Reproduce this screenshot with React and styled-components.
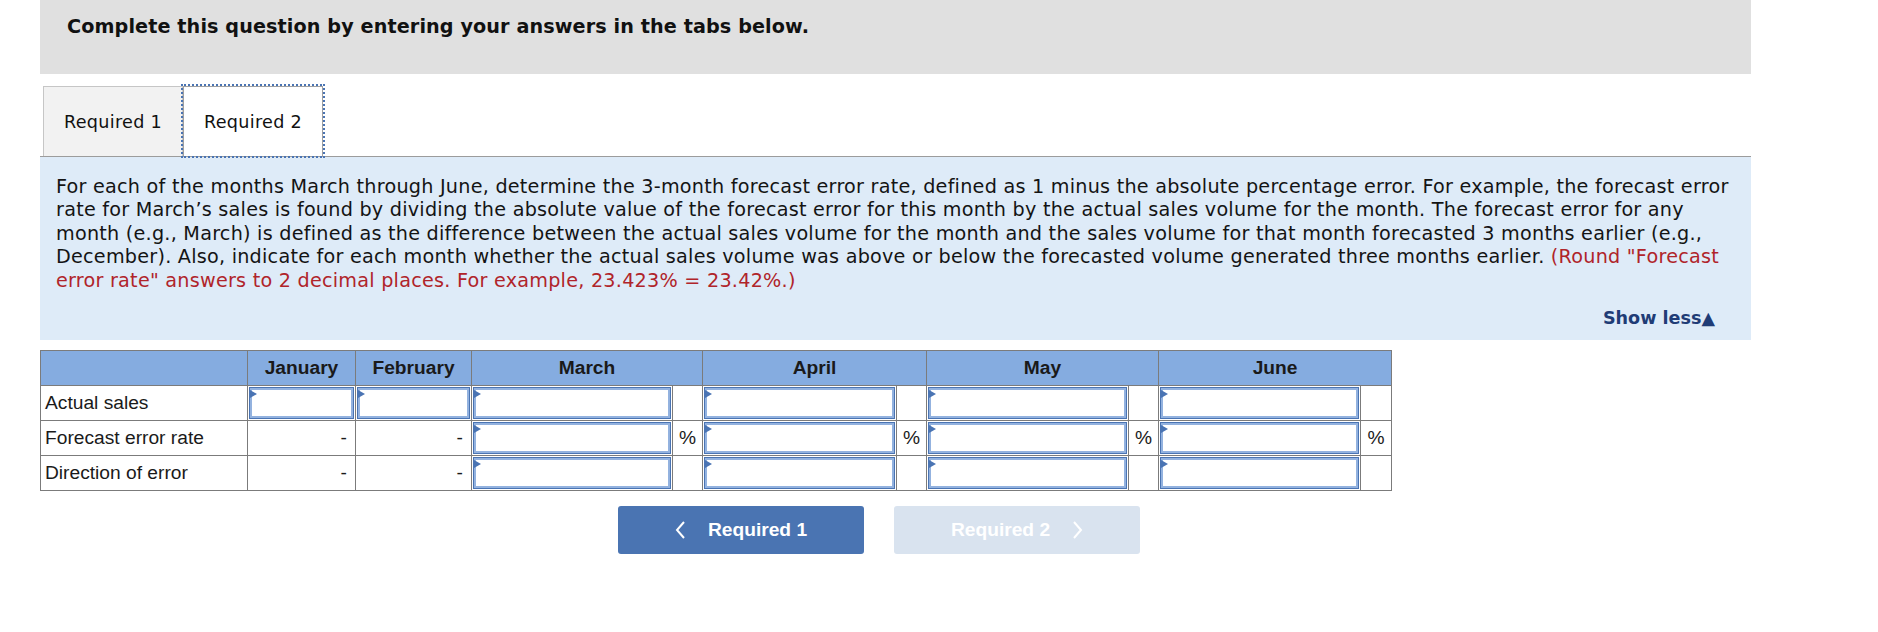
import React from 'react'
import styled, { createGlobalStyle } from 'styled-components'

const GlobalStyle = createGlobalStyle`
  body {
    margin: 0;
    background: #fff;
    font-family: "DejaVu Sans", Verdana, sans-serif;
    color: #141414;
  }
`

const months = ['March', 'April', 'May', 'June']

function Chevron({ dir }) {
  // thin arrow used on the prev / next buttons
  const pts = dir === 'left' ? '9,1 2,9 9,17' : '2,1 9,9 2,17'
  return (
    <svg width="11" height="18" viewBox="0 0 11 18">
      <polyline points={pts} fill="none" stroke="#fff" strokeWidth="2" />
    </svg>
  )
}

export default function App() {
  return (
    <Page>
      <GlobalStyle />
      <Banner>
        <h1>Complete this question by entering your answers in the tabs below.</h1>
      </Banner>

      <TabBar>
        <Tab>Required 1</Tab>
        <Tab $active>Required 2</Tab>
      </TabBar>

      <InfoPanel>
        <p>
          For each of the months March through June, determine the 3-month forecast error rate,
          defined as 1 minus the absolute percentage error. For example, the forecast error rate
          for March’s sales is found by dividing the absolute value of the forecast error for this
          month by the actual sales volume for the month. The forecast error for any month (e.g.,
          March) is defined as the difference between the actual sales volume for the month and the
          sales volume for that month forecasted 3 months earlier (e.g., December). Also, indicate
          for each month whether the actual sales volume was above or below the forecasted volume
          generated three months earlier.{' '}
          <Note>
            (Round "Forecast error rate" answers to 2 decimal places. For example, 23.423% = 23.42%.)
          </Note>
        </p>
        <ShowLess>Show less▲</ShowLess>
      </InfoPanel>

      <Grid>
        <colgroup>
          <col style={{ width: 207 }} />
          <col style={{ width: 108 }} />
          <col style={{ width: 116 }} />
          <col style={{ width: 201 }} />
          <col style={{ width: 30 }} />
          <col style={{ width: 194 }} />
          <col style={{ width: 30 }} />
          <col style={{ width: 202 }} />
          <col style={{ width: 30 }} />
          <col style={{ width: 202 }} />
          <col style={{ width: 31 }} />
        </colgroup>
        <thead>
          <tr>
            <Head></Head>
            <Head>January</Head>
            <Head>February</Head>
            {months.map(m => (
              <Head key={m} colSpan={2}>{m}</Head>
            ))}
          </tr>
        </thead>
        <tbody>
          <tr>
            <Label>Actual sales</Label>
            <EntryCell><Entry /></EntryCell>
            <EntryCell><Entry /></EntryCell>
            {months.map(m => (
              <React.Fragment key={m}>
                <EntryCell><Entry /></EntryCell>
                <Unit />
              </React.Fragment>
            ))}
          </tr>
          <tr>
            <Label>Forecast error rate</Label>
            <Dash>-</Dash>
            <Dash>-</Dash>
            {months.map(m => (
              <React.Fragment key={m}>
                <EntryCell><Entry /></EntryCell>
                <Unit>%</Unit>
              </React.Fragment>
            ))}
          </tr>
          <tr>
            <Label>Direction of error</Label>
            <Dash>-</Dash>
            <Dash>-</Dash>
            {months.map(m => (
              <React.Fragment key={m}>
                <EntryCell><Entry /></EntryCell>
                <Unit />
              </React.Fragment>
            ))}
          </tr>
        </tbody>
      </Grid>

      <NavRow>
        <NavButton>
          <Chevron dir="left" />
          <span>Required 1</span>
        </NavButton>
        <NavButton $disabled>
          <span>Required 2</span>
          <Chevron dir="right" />
        </NavButton>
      </NavRow>
    </Page>
  )
}

const Page = styled.div`
  width: 1711px;
  padding-left: 40px;
  padding-bottom: 60px;
`

const Banner = styled.div`
  background: #e0e0e0;
  height: 74px;
  box-sizing: border-box;
  padding: 15px 27px 0;
  h1 {
    margin: 0;
    font-size: 19.2px;
    line-height: 23px;
    letter-spacing: 0.1px;
    font-weight: bold;
    color: #111;
  }
`

const TabBar = styled.div`
  display: flex;
  align-items: flex-end;
  margin-top: 12px;
  padding-left: 3px;
  border-bottom: 1px solid #9c9c9c;
`

const Tab = styled.div`
  width: 140px;
  height: 70px;
  box-sizing: border-box;
  display: flex;
  align-items: center;
  justify-content: center;
  font-size: 17.6px;
  letter-spacing: 0.3px;
  color: #111;
  background: ${p => (p.$active ? '#fff' : '#f2f2f2')};
  border: 1px solid ${p => (p.$active ? '#a0a0a0' : '#c6c6c6')};
  border-bottom: none;
  outline: ${p => (p.$active ? '2px dotted #4a74b3' : 'none')};
  position: relative;
  z-index: ${p => (p.$active ? 1 : 0)};
`

const InfoPanel = styled.div`
  background: #deebf8;
  padding: 18px 8px 10px 16px;
  p {
    margin: 0;
    font-size: 19.2px;
    line-height: 23.4px;
    letter-spacing: 0.24px;
    color: #141414;
  }
`

const Note = styled.span`
  color: #b0242a;
`

const ShowLess = styled.div`
  margin-top: 15px;
  padding-right: 28px;
  text-align: right;
  font-size: 17.6px;
  line-height: 23px;
  font-weight: bold;
  color: #1f3c76;
`

const Grid = styled.table`
  margin-top: 10px;
  width: 1351px;
  table-layout: fixed;
  border-collapse: collapse;
  font-family: "Liberation Sans", Arial, sans-serif;
  font-size: 19.2px;
  color: #1a1a1a;
  td, th {
    border: 1px solid #7b7b7b;
    padding: 0;
  }
`

const Head = styled.th`
  height: 34px;
  background: #85ace0;
  font-weight: bold;
  text-align: center;
`

const Label = styled.td`
  height: 33.5px;
  padding-left: 4px !important;
  text-align: left;
`

const Dash = styled.td`
  text-align: right;
  padding-right: 8px !important;
`

const Unit = styled.td`
  text-align: center;
`

const EntryCell = styled.td`
  padding: 1px !important;
`

const Entry = styled.div`
  position: relative;
  height: 32px;
  box-sizing: border-box;
  background: #fff;
  border: 1px solid #4a74b3;
  box-shadow: inset 0 0 0 2px #93b2df;
  &::before {
    content: '';
    position: absolute;
    top: 2px;
    left: 0;
    border-left: 7px solid #4a74b3;
    border-top: 4.5px solid transparent;
    border-bottom: 4.5px solid transparent;
  }
`

const NavRow = styled.div`
  display: flex;
  gap: 30px;
  margin-top: 15px;
  padding-left: 578px;
`

const NavButton = styled.button`
  width: 246px;
  height: 48px;
  border: none;
  border-radius: 3px;
  display: flex;
  align-items: center;
  justify-content: center;
  gap: 22px;
  font-family: "Liberation Sans", Arial, sans-serif;
  font-size: 19.2px;
  font-weight: bold;
  color: #fff;
  background: ${p => (p.$disabled ? '#d9e3ef' : '#4a74b2')};
`
